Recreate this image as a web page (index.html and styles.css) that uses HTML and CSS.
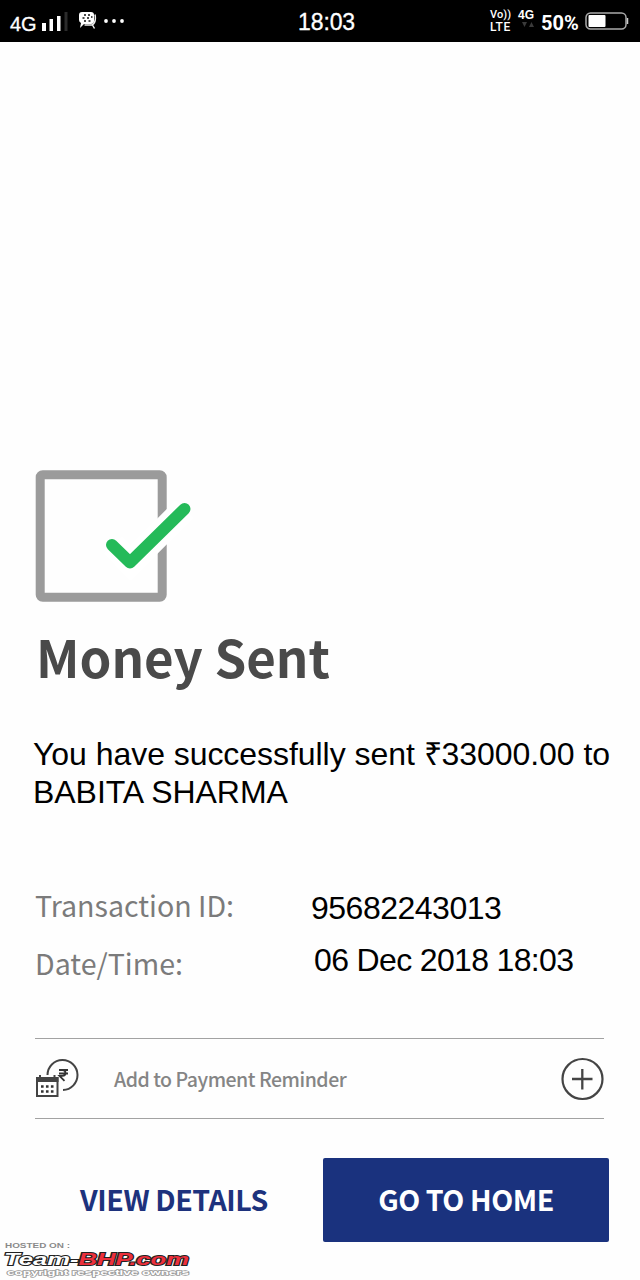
FILE: index.html
```html
<!DOCTYPE html>
<html lang="en">
<head>
<meta charset="utf-8">
<title>Money Sent</title>
<link rel="stylesheet" href="styles.css">
</head>
<body>
<div class="screen">
  <header class="status">
    <div class="status-left">
      <span class="net">4G</span>
      <svg class="signal" width="26" height="20" viewBox="0 0 26 20"><path d="M0 12h4v8H0zM7.500 8h3.500v12H7.500zM15 5h3.500v15H15z" fill="#fff"/><path d="M22.500 1h3v19h-3z" fill="#2b2b2b"/></svg>
      <svg class="chat" width="18" height="18" viewBox="0 0 18 18"><path d="M3 0h9q3 0 3 3v6q0 3-3 3H5l-4 4 1-5Q0 10 0 8V3Q0 0 3 0z" fill="#fff"/><path d="M16 2.500q1.500 8-3 10.500H5.500M13.500 13l2 3.500" fill="none" stroke="#eee" stroke-width="1.500"/><path d="M5 3h2M9 3h2M3.500 6h2M8 6h2M12 5h1.500M5 9h2M9.500 9h2" stroke="#111" stroke-width="1.300"/></svg>
      <svg class="dots" width="20" height="4" viewBox="0 0 20 4"><circle cx="2" cy="2" r="1.900"/><circle cx="10" cy="2" r="1.900"/><circle cx="18" cy="2" r="1.900"/></svg>
    </div>
    <div class="clock">18:03</div>
    <div class="status-right">
      <div class="volte"><span class="vo">Vo))</span><span class="lte">LTE</span></div>
      <div class="data"><span class="data-net">4G</span><svg width="12" height="6" viewBox="0 0 12 6"><path d="M0 0h5L2.500 5zM7 5h5L9.500 0z" fill="#3a3a3a"/></svg></div>
      <span class="percent">50%</span>
      <svg class="battery" width="44" height="18" viewBox="0 0 44 18"><rect x="1" y="1" width="40" height="16" rx="4.500" fill="none" stroke="#aaa" stroke-width="1.500"/><rect x="3.500" y="3" width="17" height="12" rx="1" fill="#fff"/><path d="M42.500 6v6" stroke="#ccc" stroke-width="1.500"/></svg>
    </div>
  </header>
  <main class="content">
    <svg class="check" width="158" height="134" viewBox="0 0 158 134">
      <rect x="5.200" y="4.800" width="122" height="122.500" rx="2.500" fill="none" stroke="#9b9b9b" stroke-width="9"/>
      <path d="M78 75L95.500 93 149.500 39" fill="none" stroke="#fff" stroke-width="25"/>
      <path d="M77 75L95 92.500 149.500 39" fill="none" stroke="#24ba59" stroke-width="12" stroke-linecap="round" stroke-linejoin="round"/>
    </svg>
    <h1 class="title">Money Sent</h1>
    <p class="message"><span class="line">You have successfully sent ₹33000.00 to</span><span class="line">BABITA SHARMA</span></p>
    <dl class="facts">
      <dt class="label">Transaction ID:</dt><dd class="value value-id">95682243013</dd>
      <dt class="label">Date/Time:</dt><dd class="value value-date">06 Dec 2018 18:03</dd>
    </dl>
    <section class="reminder">
      <svg class="cal" width="44" height="40" viewBox="0 0 44 40">
        <path d="M12.500 16A15 15 0 1 1 28 31" fill="none" stroke="#444" stroke-width="2"/>
        <path d="M24 11h9M24 14.500h9M24 11h3.500q3 0 3 2.900t-3 2.900H24.500l5 5" fill="none" stroke="#333" stroke-width="1.800"/>
        <path d="M2 19h20.500v18H2z" fill="#fff" stroke="#444" stroke-width="2"/>
        <path d="M1 18h22.500v5H1zM4 16h2v3H4zM18.500 16h2v3h-2z" fill="#444"/>
        <path d="M6 27.500h12.500M6 32.500h12.500" stroke="#333" stroke-width="2.600" stroke-dasharray="2.600 2.350"/>
      </svg>
      <span class="reminder-text">Add to Payment Reminder</span>
      <svg class="plus" width="44" height="44" viewBox="0 0 44 44"><circle cx="22.500" cy="22" r="20" fill="none" stroke="#444" stroke-width="2.200"/><path d="M12 22h20.500M22.300 12v20.500" stroke="#444" stroke-width="2.300"/></svg>
    </section>
    <div class="actions">
      <a class="view"><span>VIEW DETAILS</span></a>
      <a class="home"><span>GO TO HOME</span></a>
    </div>
  </main>
  <svg class="credit" width="200" height="40" viewBox="0 0 200 40">
    <g font-family="Liberation Sans, sans-serif">
      <text class="hosted" x="5" y="8" textLength="65" lengthAdjust="spacingAndGlyphs">HOSTED ON :</text>
      <text class="brand" x="4" y="25" textLength="185" lengthAdjust="spacingAndGlyphs"><tspan class="team">Team-</tspan><tspan class="bhp">BHP.com</tspan></text>
      <text class="copy" x="7" y="35" textLength="182" lengthAdjust="spacingAndGlyphs">copyright respective owners</text>
    </g>
  </svg>
</div>
</body>
</html>
```

FILE: styles.css
```css
* { box-sizing: border-box; }
body { margin: 0; background: #fefefe; }
.screen {
  position: relative;
  width: 640px;
  height: 1280px;
  overflow: hidden;
  background: #fefefe;
  font-family: "Noto Sans CJK SC", "Noto Sans", sans-serif;
}
.status {
  display: grid;
  grid-template-columns: 298px 1fr 150px;
  height: 42px;
  background: #000;
  color: #fff;
  font-family: "Liberation Sans", Arial, sans-serif;
}
.status-left { display: flex; align-items: flex-start; padding-left: 10px; }
.net { font-size: 20px; line-height: 24px; margin-top: 12px; width: 32px; -webkit-text-stroke: .3px #fff; }
.signal { margin-top: 11px; }
.chat { margin: 12px 0 0 11px; }
.dots { margin: 19px 0 0 7px; fill: #fff; }
.clock { font-size: 23px; line-height: 44px; letter-spacing: -.1px; -webkit-text-stroke: .3px #fff; }
.status-right { display: flex; align-items: flex-start; }
.volte { width: 28px; padding-top: 9px; display: grid; font-family: Roboto, sans-serif; font-weight: 500; }
.vo { font-size: 11px; line-height: 12px; letter-spacing: .1px; }
.lte { font-size: 12px; line-height: 12px; letter-spacing: .6px; }
.data { width: 23px; padding-top: 8px; display: grid; justify-items: start; }
.data svg { margin-left: 4px; }
.data-net { font-size: 12px; line-height: 14px; font-weight: 700; }
.percent { width: 44px; font: 700 20px/24px Roboto, sans-serif; margin-top: 11px; }
.battery { margin-top: 12px; flex: none; }
.content { padding: 428px 31px 0 35px; }
.check { display: block; }
.title {
  margin: 16px 0 0 1px;
  font-size: 51px;
  line-height: 72px;
  font-weight: 700;
  color: #4a4a4a;
  white-space: nowrap;
}
.message {
  margin: 43px -20px 0 -2px;
  font: 32px/38px "Liberation Sans", Arial, sans-serif;
  letter-spacing: -.05px;
  color: #000;
  white-space: nowrap;
}
.line { display: block; }
.facts {
  display: grid;
  grid-template-columns: 276px 1fr;
  grid-template-rows: 58px 58px;
  margin: 65px 0 0;
  color: #000;
  white-space: nowrap;
}
.label { font-size: 28.6px; line-height: 58px; color: #7b7b7b; }
.value { margin: 0; font: 32px/58px "Liberation Sans", Arial, sans-serif; }
.value-id { padding-top: 3px; letter-spacing: -.5px; }
.value-date { padding-left: 3px; margin-top: -3px; letter-spacing: -.65px; }
.reminder {
  display: flex;
  align-items: center;
  height: 81px;
  margin: 46px 5px 0 0;
  border-top: 1.500px solid #a2a2a2;
  border-bottom: 1.500px solid #a2a2a2;
}
.reminder-text { flex: 1; margin-left: 35px; font-size: 19.5px; line-height: 40px; letter-spacing: -.48px; font-weight: 500; color: #858585; padding-top: 1px; white-space: nowrap; }
.actions { display: grid; grid-template-columns: 276px 286px; column-gap: 12px; margin-top: 39px; height: 84px; }
.view, .home { display: flex; align-items: center; justify-content: center; font-size: 28.6px; line-height: 42px; font-weight: 700; letter-spacing: -.45px; padding-bottom: 2px; white-space: nowrap; }
.view { color: #1d327d; padding-left: 2px; }
.home { color: #fff; background: #1a327e; border-radius: 2px; }
.credit { position: absolute; left: 0; top: 1240px; }
.hosted { font-size: 7.5px; font-weight: 700; fill: #8a8a8a; }
.brand { font-size: 17px; font-weight: 700; font-style: italic; paint-order: stroke; stroke: #222; stroke-width: 2px; }
.team { fill: #fff; }
.bhp { fill: #ed303c; }
.copy { font-size: 8px; font-weight: 700; fill: #fff; paint-order: stroke; stroke: #999; stroke-width: 1.300px; }
```
